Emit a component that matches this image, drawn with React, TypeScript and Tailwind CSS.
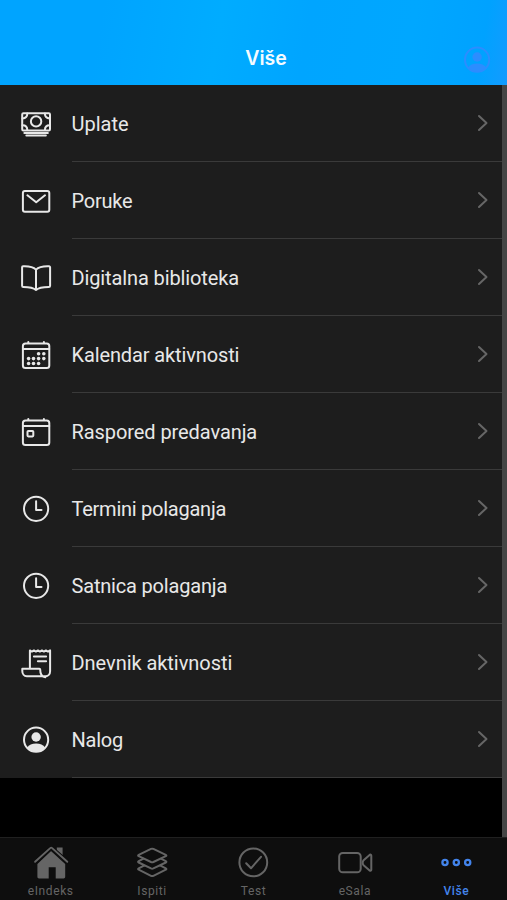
import type { ReactNode } from "react";

function Glyph({ children }: { children: ReactNode }) {
  return (
    <svg
      viewBox="0 0 32 32"
      className="h-8 w-8 shrink-0 overflow-visible"
      fill="none"
      stroke="currentColor"
      strokeWidth="2"
      strokeLinecap="round"
      strokeLinejoin="round"
    >
      {children}
    </svg>
  );
}

const CashIcon = () => (
  <Glyph>
    <rect x="2.2" y="6.2" width="27.8" height="17.2" rx="1.2" />
    <circle cx="16.1" cy="14.4" r="5.2" />
    <path d="M2.5 11.4c3 0 4.800-1.800 4.800-4.800M29.700 11.400c-3 0-4.800-1.800-4.800-4.800M2.500 18.200c3 0 4.800 1.800 4.800 4.800M29.700 18.200c-3 0-4.800 1.800-4.800 4.800" />
    <path d="M4.300 26h23.600M6.300 28.500h19.600" strokeWidth="1.9" />
  </Glyph>
);

const MailIcon = () => (
  <Glyph>
    <rect x="2.900" y="6.900" width="26.400" height="20.800" rx="2" />
    <path d="M7.400 11.300l8.800 7 8.800-7" />
  </Glyph>
);

const BookIcon = () => (
  <Glyph>
    <path d="M16 8.600C13.200 5.800 7.500 5 3.100 5.200a1.100 1.100 0 0 0-1 1.100v18.400c0 .7.5 1.200 1.200 1.200 4.800 0 9.800.4 12.700 3.100 2.900-2.700 7.900-3.100 12.700-3.100.7 0 1.400-.5 1.400-1.200V6.300c0-.6-.4-1-1-1.100C24.700 5 18.800 5.800 16 8.600zV29" />
  </Glyph>
);

const CalendarFrame = () => (
  <>
    <rect x="2.900" y="5.500" width="26.400" height="24.600" rx="2.600" />
    <path d="M3 11h26.200M8.300 5V3.900M23.900 5V3.900" />
  </>
);

const CalendarDaysIcon = () => (
  <Glyph>
    <CalendarFrame />
    <g fill="currentColor" stroke="none">
      {[
        [18.6, 15.7], [23.8, 15.7],
        [8.6, 20.6], [13.5, 20.6], [18.6, 20.6], [23.8, 20.6],
        [8.6, 25.5], [13.5, 25.5], [18.6, 25.5],
      ].map(([x, y]) => (
        <circle key={`${x}-${y}`} cx={x} cy={y} r="1.800" />
      ))}
    </g>
  </Glyph>
);

const CalendarDayIcon = () => (
  <Glyph>
    <CalendarFrame />
    <rect x="7.500" y="16" width="5.800" height="5.400" rx="0.800" />
  </Glyph>
);

const ClockIcon = () => (
  <Glyph>
    <circle cx="16.100" cy="16.800" r="12.100" />
    <path d="M16.100 9.200v8.800h5.400" />
  </Glyph>
);

const ReceiptIcon = () => (
  <Glyph>
    <path d="M9.900 21.500V4.400l2 1.200 2-1.200 2 1.200 2-1.200 2 1.200 2-1.200 2 1.200 2-1.200 2 1.200 2.200-1.200v20.900c0 3-2 4.900-4.500 4.900H6.800c-2.700 0-4.500-2.300-4.500-5.300v-2.200h17c.5 0 .9.400.9.900 0 4 1.200 7.600 5.200 7.600" />
    <path d="M13.900 10.400h12.200M17.900 15.200h8.200" />
  </Glyph>
);

const PersonIcon = () => (
  <Glyph>
    <circle cx="16.100" cy="16.700" r="12.100" />
    <g fill="currentColor" stroke="none">
      <circle cx="16.100" cy="14" r="4.700" />
      <path d="M7 24.800c2-3.200 5-4.200 9.100-4.200s7.100 1 9.100 4.200a12.800 12.800 0 0 1-18.200 0z" />
    </g>
  </Glyph>
);

const items: { label: string; icon: ReactNode; tracking: string }[] = [
  { label: "Uplate", icon: <CashIcon />, tracking: "tracking-[0px]" },
  { label: "Poruke", icon: <MailIcon />, tracking: "tracking-[-0.25px]" },
  { label: "Digitalna biblioteka", icon: <BookIcon />, tracking: "tracking-[-0.12px]" },
  { label: "Kalendar aktivnosti", icon: <CalendarDaysIcon />, tracking: "tracking-[-0.12px]" },
  { label: "Raspored predavanja", icon: <CalendarDayIcon />, tracking: "tracking-[-0.08px]" },
  { label: "Termini polaganja", icon: <ClockIcon />, tracking: "tracking-[-0.25px]" },
  { label: "Satnica polaganja", icon: <ClockIcon />, tracking: "tracking-[-0.18px]" },
  { label: "Dnevnik aktivnosti", icon: <ReceiptIcon />, tracking: "tracking-[-0.05px]" },
  { label: "Nalog", icon: <PersonIcon />, tracking: "tracking-[-0.25px]" },
];

function TabIcon({ children }: { children: ReactNode }) {
  return (
    <svg
      viewBox="0 0 36 36"
      className="h-9 w-9"
      fill="none"
      stroke="currentColor"
      strokeWidth="2"
      strokeLinecap="round"
      strokeLinejoin="round"
    >
      {children}
    </svg>
  );
}

const tabs: { label: string; icon: ReactNode; active?: boolean }[] = [
  {
    label: "eIndeks",
    icon: (
      <TabIcon>
        <path d="M18 7L32.200 20v12.800c0 1-.6 1.600-1.600 1.600h-7.900V23.200h-7v11.200H6c-1 0-1.600-.6-1.600-1.600V20z" fill="currentColor" stroke="none" />
        <path d="M23.800 3.400h5.800v13l-5.800-5.200z" fill="currentColor" stroke="none" />
        <path d="M2.100 18L17.500 4.400c.4-.4 1-.4 1.400 0L34.300 18" stroke="#0e0e0e" strokeWidth="4.400" />
        <path d="M2.100 17.800L17.500 3.900c.4-.4 1-.4 1.400 0l15.400 13.900" strokeWidth="1.900" />
      </TabIcon>
    ),
  },
  {
    label: "Ispiti",
    icon: (
      <TabIcon>
        <path d="M17 4.900q1.200-.5 2.400 0l12.400 5.900c.8.400.8 1 0 1.400L19.400 18q-1.200.5-2.400 0L4.700 12.200c-.8-.4-.8-1 0-1.400z" />
        <path d="M9.500 14.700l-4.800 2.400c-.8.400-.8 1 0 1.400L17 24.400q1.200.5 2.400 0l12.400-5.900c.8-.4.8-1 0-1.400L27 14.700M9.500 21.900l-4.800 2.400c-.8.400-.8 1 0 1.400L17 31.800q1.200.5 2.400 0l12.400-6.100c.8-.4.8-1 0-1.400L27 21.900" />
      </TabIcon>
    ),
  },
  {
    label: "Test",
    icon: (
      <TabIcon>
        <circle cx="18.300" cy="18.400" r="13.900" />
        <path d="M11.200 19.300l4.800 5 10-11.500" />
      </TabIcon>
    ),
  },
  {
    label: "eSala",
    icon: (
      <TabIcon>
        <rect x="2.200" y="9" width="21.500" height="19.300" rx="3.600" />
        <path d="M26.600 16.200l6-5.300c.8-.6 1.700-.2 1.700.8v14c0 1-.9 1.400-1.700.8l-6-5.300c-1.200-1.200-1.200-3.800 0-5z" />
      </TabIcon>
    ),
  },
  {
    label: "Više",
    active: true,
    icon: (
      <TabIcon>
        <circle cx="7" cy="18.500" r="2.600" strokeWidth="2.300" />
        <circle cx="18.300" cy="18.500" r="2.600" strokeWidth="2.300" />
        <circle cx="29.700" cy="18.500" r="2.600" strokeWidth="2.300" />
      </TabIcon>
    ),
  },
];

export default function App() {
  return (
    <div className="flex h-[900px] w-[507px] flex-col overflow-hidden bg-black font-[Roboto,sans-serif]">
      <header className="grid h-[85px] shrink-0 grid-cols-[1fr_auto_1fr] items-end bg-[linear-gradient(100deg,#00a4ff_0%,#00a4ff_20%,#00acff_43%,#00a5ff_60%,#00a7ff_80%,#00a2ff_94%,#149bff_100%)] pb-[10px]">
        <span />
        <h1 className="pb-[3px] pl-[25px] font-[Inter,sans-serif] text-[19.5px] leading-[28px] font-semibold text-[#f4fbff]">
          Više
        </h1>
        <span className="flex justify-end pr-[14px] text-[#2c8dff]">
          <PersonIcon />
        </span>
      </header>
      <main className="flex h-[752px] shrink-0">
        <ul className="w-[502px]">
          {items.map((item) => (
            <li key={item.label} className="flex h-[77px] bg-[#1d1d1d] pl-5 text-[#e8e8e8]">
              <span className="flex h-[76px] w-[51.5px] items-center">{item.icon}</span>
              <span className="ml-[0.5px] flex h-[77px] flex-1 items-center justify-between border-b border-[#3a3a3a] pr-[13px]">
                <span className={`-ml-[0.5px] pt-px text-[20px] leading-6 ${item.tracking}`}>{item.label}</span>
                <svg
                  viewBox="0 0 12 18"
                  className="h-[18px] w-3"
                  fill="none"
                  stroke="#666"
                  strokeWidth="2"
                  strokeLinecap="round"
                  strokeLinejoin="round"
                >
                  <path d="M2 2l7.500 7L2 16" />
                </svg>
              </span>
            </li>
          ))}
        </ul>
        <div className="w-[5px] bg-[#454545]" />
      </main>
      <nav className="grid h-[63px] shrink-0 grid-cols-5 border-t border-[#202020] bg-[#0e0e0e]">
        {tabs.map((tab) => (
          <div
            key={tab.label}
            className={`flex flex-col items-center pt-[6px] ${tab.active ? "text-[#4384eb]" : "text-[#656565]"}`}
          >
            {tab.icon}
            <span className={`mt-[4px] text-[12px] leading-[14px] tracking-[0.6px] ${tab.active ? "font-medium" : "font-normal"}`}>
              {tab.label}
            </span>
          </div>
        ))}
      </nav>
    </div>
  );
}
